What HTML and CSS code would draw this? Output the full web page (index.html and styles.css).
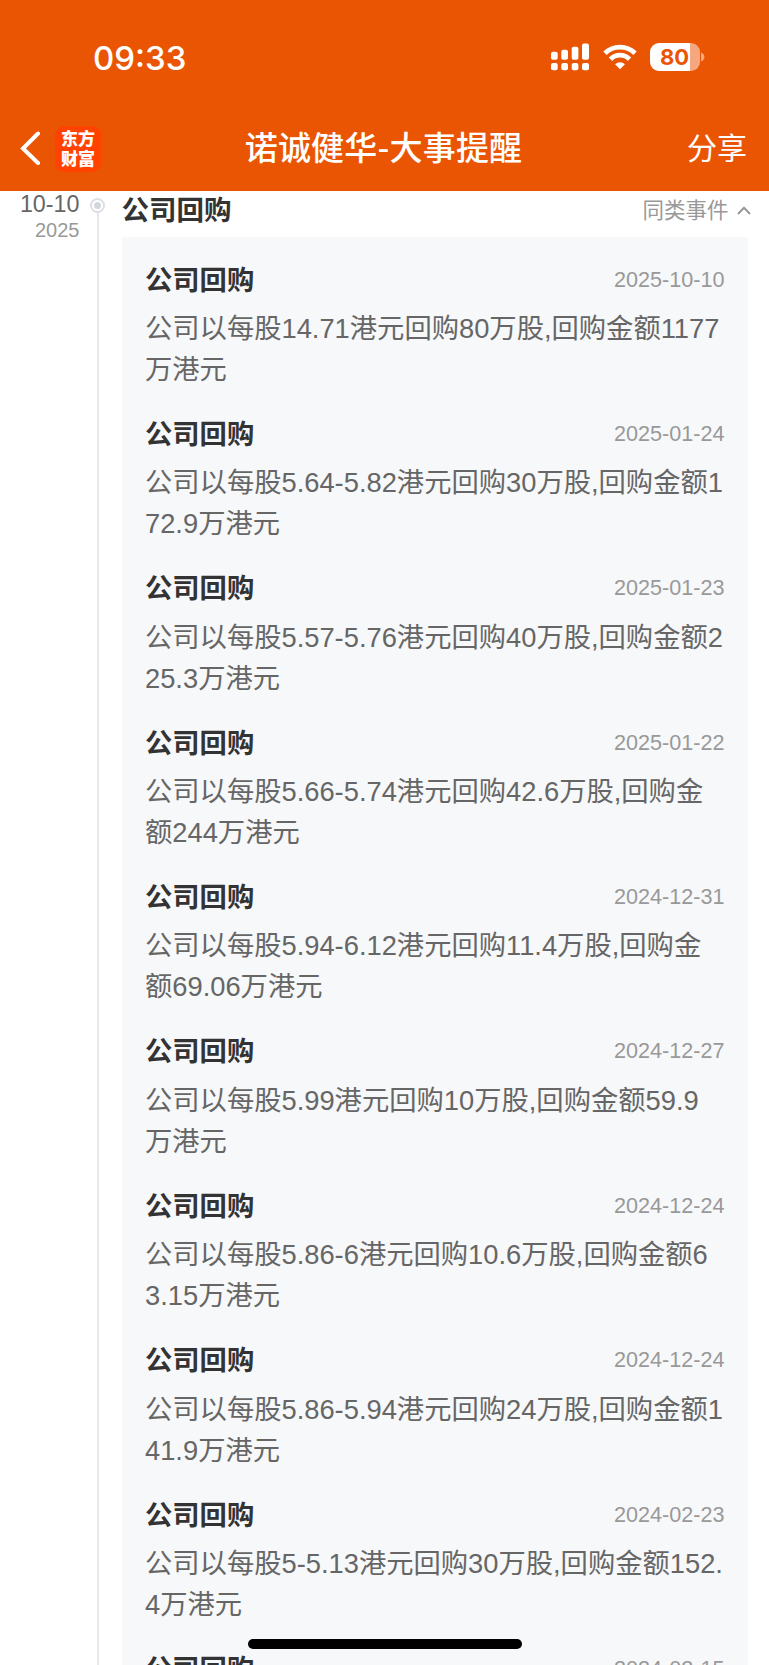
FILE: index.html
```html
<!DOCTYPE html>
<html lang="zh-CN">
<head>
<meta charset="utf-8">
<title>诺诚健华-大事提醒</title>
<link rel="stylesheet" href="styles.css">
</head>
<body>
<div class="screen">
  <header class="header">
    <div class="status">
      <span class="clock">09:33</span>
      <div class="indicators">
        <svg class="signal" width="39" height="28" viewBox="0 0 39 28" fill="#fff">
          <rect x="0" y="8.7" width="6.700" height="8" rx="2"/><rect x="10.3" y="6.7" width="6.700" height="10" rx="2"/><rect x="20.7" y="3.7" width="6.700" height="13" rx="2"/><rect x="31" y="0.5" width="7" height="16.2" rx="2"/>
          <rect x="0" y="20" width="6.700" height="7.3" rx="2"/><rect x="10.3" y="20" width="6.700" height="7.3" rx="2"/><rect x="20.7" y="20" width="6.700" height="7.3" rx="2"/><rect x="31" y="20" width="7" height="7.3" rx="2"/>
        </svg>
        <svg class="wifi" width="34" height="26" viewBox="0 0 34 26" fill="none" stroke="#fff" stroke-width="4.8">
          <path d="M2 9.3a21.3 21.3 0 0 1 30 0"/>
          <path d="M7.5 15.2a13.3 13.3 0 0 1 19 0"/>
          <path d="M17 25.2l-4.9-5a7 7 0 0 1 9.8 0z" fill="#fff" stroke="none"/>
        </svg>
        <div class="battery"><span class="level">80</span></div>
        <svg width="4" height="10" viewBox="0 0 4 10"><path d="M0 0.5q3.4 1.3 3.4 4.5T0 9.500z" fill="#f5a780"/></svg>
      </div>
    </div>
    <nav class="nav">
      <div class="nav-left">
        <svg class="back" width="21" height="35" viewBox="0 0 21 35" fill="none" stroke="#fff" stroke-width="4" stroke-linecap="round" stroke-linejoin="miter"><path d="M18 2.500L3 17.500L18 32"/></svg>
        <div class="logo"><span>东方</span><span>财富</span></div>
      </div>
      <h1 class="title">诺诚健华-大事提醒</h1>
      <span class="share">分享</span>
    </nav>
  </header>
  <main class="timeline">
    <div class="day"><span class="md">10-10</span><span class="year">2025</span></div>
    <div class="axis"><i class="dot"></i><i class="line"></i></div>
    <section class="event">
      <div class="event-head">
        <h2>公司回购</h2>
        <span class="similar">同类事件<svg width="14" height="9" viewBox="0 0 14 9" fill="none" stroke="#999" stroke-width="2"><path d="M1 8l6-6.300L13 8"/></svg></span>
      </div>
      <div class="panel">
        <article class="item"><div class="row"><h3>公司回购</h3><time>2025-10-10</time></div><p>公司以每股14.71港元回购80万股,回购金额1177<br>万港元</p></article>
        <article class="item"><div class="row"><h3>公司回购</h3><time>2025-01-24</time></div><p>公司以每股5.64-5.82港元回购30万股,回购金额1<br>72.9万港元</p></article>
        <article class="item"><div class="row"><h3>公司回购</h3><time>2025-01-23</time></div><p>公司以每股5.57-5.76港元回购40万股,回购金额2<br>25.3万港元</p></article>
        <article class="item"><div class="row"><h3>公司回购</h3><time>2025-01-22</time></div><p>公司以每股5.66-5.74港元回购42.6万股,回购金<br>额244万港元</p></article>
        <article class="item"><div class="row"><h3>公司回购</h3><time>2024-12-31</time></div><p>公司以每股5.94-6.12港元回购11.4万股,回购金<br>额69.06万港元</p></article>
        <article class="item"><div class="row"><h3>公司回购</h3><time>2024-12-27</time></div><p>公司以每股5.99港元回购10万股,回购金额59.9<br>万港元</p></article>
        <article class="item"><div class="row"><h3>公司回购</h3><time>2024-12-24</time></div><p>公司以每股5.86-6港元回购10.6万股,回购金额6<br>3.15万港元</p></article>
        <article class="item"><div class="row"><h3>公司回购</h3><time>2024-12-24</time></div><p>公司以每股5.86-5.94港元回购24万股,回购金额1<br>41.9万港元</p></article>
        <article class="item"><div class="row"><h3>公司回购</h3><time>2024-02-23</time></div><p>公司以每股5-5.13港元回购30万股,回购金额152.<br>4万港元</p></article>
        <article class="item"><div class="row"><h3>公司回购</h3><time>2024-02-15</time></div></article>
      </div>
    </section>
  </main>
  <div class="home-bar"></div>
</div>
</body>
</html>
```

FILE: styles.css
```css
* { box-sizing: border-box; margin: 0; padding: 0; }
body { background: #fff; font-family: "Liberation Sans", "Noto Sans CJK SC", sans-serif; }
.screen { position: relative; width: 769px; height: 1665px; overflow: hidden; display: flex; flex-direction: column; }

.header { flex: none; height: 191px; background: #ea5504; color: #fff; }
.status { height: 106px; padding: 8px 64px 0 93px; display: flex; align-items: center; justify-content: space-between; }
.clock { font: 500 33px/40px Inter, sans-serif; padding-top: 2px; }
.indicators { display: flex; align-items: center; }
.wifi { margin: 0 13px 0 13px; }
.battery { width: 50px; height: 28px; border-radius: 9px; background: linear-gradient(to right, #fff 40px, #f5a780 40px); margin-right: 1px; }
.level { display: block; width: 49px; text-align: center; font: 700 22px/28px Inter, sans-serif; color: #ea5504; }

.nav { height: 85px; padding: 0 22px 0 20px; display: grid; grid-template-columns: 1fr auto 1fr; align-items: center; }
.nav-left { display: flex; align-items: center; gap: 14px; }
.logo { width: 46px; height: 46px; border-radius: 9px; background: #ff4200; display: flex; flex-direction: column; align-items: center; justify-content: center; padding-bottom: 2px; font: 900 17px/20px "Noto Sans CJK SC", sans-serif; }
.title { font: 500 33px/44px "Noto Sans CJK SC", sans-serif; letter-spacing: 0.200px; padding-bottom: 5px; }
.share { justify-self: end; font: 400 30px/44px "Noto Sans CJK SC", sans-serif; padding-bottom: 5px; }

.timeline { flex: 1; min-height: 0; display: grid; grid-template-columns: 79.500px 36.500px 1fr; }
.day { display: flex; flex-direction: column; align-items: flex-end; }
.md { font-size: 23.300px; line-height: 26px; color: #666; }
.year { font-size: 20px; line-height: 26px; color: #999; }
.axis { display: flex; flex-direction: column; align-items: center; padding: 7px 0 0 0; }
.dot { width: 15px; height: 15px; border-radius: 50%; border: 2px solid #dcdfe5; padding: 2px; background: #d3d6dc content-box; }
.line { flex: 1; width: 2px; background: #e8e9ed; }

.event { padding: 0 21px 0 5.500px; }
.event-head { height: 46px; padding: 0 0 7px 0; display: flex; align-items: center; justify-content: space-between; }
h2 { font-size: 27.5px; line-height: 36px; font-weight: 700; color: #333; }
.similar { font-size: 21.500px; line-height: 36px; color: #999; display: flex; align-items: center; gap: 8px; margin-right: -2.500px; }
.panel { background: #f7f8fa; border-radius: 2px; height: 1500px; padding: 22.500px 23.500px 0 23.500px; display: flex; flex-direction: column; gap: 23.400px; }
.item { display: flex; flex-direction: column; gap: 7.400px; padding-bottom: 0.600px; }
.row { display: flex; align-items: center; justify-content: space-between; }
h3 { font-size: 27.300px; line-height: 41px; font-weight: 700; color: #333; }
time { font-size: 21.600px; line-height: 39px; padding-bottom: 2px; color: #999; }
.item p { font-size: 27.300px; line-height: 41px; color: #666; white-space: nowrap; }

.home-bar { position: absolute; left: 247.500px; top: 1639px; width: 274px; height: 10px; border-radius: 5px; background: #000; }
```
